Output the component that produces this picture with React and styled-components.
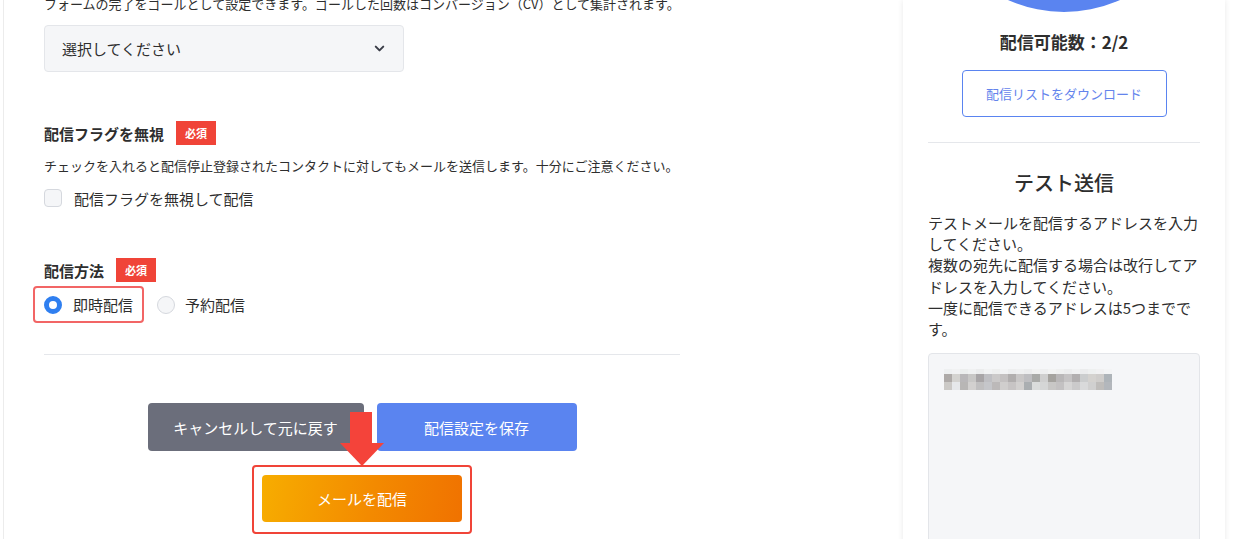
import React from 'react'
import styled, { createGlobalStyle } from 'styled-components'

const GlobalStyle = createGlobalStyle`
    html, body {
        margin: 0;
        padding: 0;
        background: #fff;
        overflow: hidden;
    }
    body {
        font-family: 'Noto Sans CJK JP', 'Noto Sans', sans-serif;
        color: #2e2e2e;
    }
`

const blur = [
    ['#eef0f1', '#f1f2f3', '#eceeee', '#f0f1f2', '#ebeced', '#f1f2f3', '#eeefef', '#f2f3f4', '#edeeef', '#eff0f1', '#ecedee', '#f1f2f2', '#eeeff0', '#f2f3f3', '#eff0f0', '#ecedee', '#f0f1f2', '#ebeced', '#eef0f0', '#f1f1f2', '#f3f4f5'],
    ['#aeaaa8', '#d4d3d0', '#b9b7b9', '#c8c7c6', '#a8a5a7', '#bfbfc3', '#cbc9c9', '#c4c1c1', '#b1aeae', '#c9c7c7', '#bebec1', '#a9aaa8', '#cfcfcf', '#a5a39f', '#b9b7b8', '#c5c3c4', '#b2afb0', '#cbcdce', '#d4d2cf', '#cfcdcb', '#aeb4b9'],
    ['#cbc9c6', '#e6e8ea', '#b8b6b5', '#d2d0cf', '#c0bfc0', '#c5c6ca', '#bcb9b9', '#d0cecd', '#c7c4c4', '#d2d0cf', '#aaaeb1', '#dadcdc', '#d5d6d6', '#c8c7c6', '#c3c1c2', '#d6d5d5', '#cbcacb', '#d9dadb', '#d0d0d0', '#bfbdbb', '#b3b7bc'],
]

const App = () => {
    return (
        <>
            <GlobalStyle />
            <Page>
                <MainCard>
                    <Hint className="top">
                        フォームの完了をゴールとして設定できます。ゴールした回数はコンバージョン（CV）として集計されます。
                    </Hint>
                    <Select>
                        <span>選択してください</span>
                        <svg width="15" height="15" viewBox="0 0 24 24" fill="none" stroke="#3a3d48" strokeWidth="3.2" strokeLinecap="round" strokeLinejoin="round">
                            <polyline points="6 9 12 15 18 9" />
                        </svg>
                    </Select>

                    <Field>
                        <Label>
                            配信フラグを無視<Badge>必須</Badge>
                        </Label>
                        <Hint>チェックを入れると配信停止登録されたコンタクトに対してもメールを送信します。十分にご注意ください。</Hint>
                        <CheckRow>
                            <Checkbox />
                            配信フラグを無視して配信
                        </CheckRow>
                    </Field>

                    <Field>
                        <Label>
                            配信方法<Badge>必須</Badge>
                        </Label>
                        <RadioGroup>
                            <RadioOption highlight>
                                <Radio checked />
                                即時配信
                            </RadioOption>
                            <RadioOption>
                                <Radio />
                                予約配信
                            </RadioOption>
                        </RadioGroup>
                    </Field>

                    <Divider />

                    <Actions>
                        <ButtonRow>
                            <Button variant="cancel" width={216}>キャンセルして元に戻す</Button>
                            <Button variant="save" width={200}>配信設定を保存</Button>
                        </ButtonRow>
                        <SendFrame>
                            <Button variant="send" width={200}>メールを配信</Button>
                        </SendFrame>
                        <Arrow width="44" height="55" viewBox="0 0 44 55">
                            <rect x="10" y="0" width="22" height="33" fill="#f4433a" />
                            <polygon points="0,31 44,31 22,54" fill="#f4433a" />
                        </Arrow>
                    </Actions>
                </MainCard>

                <SideCard>
                    <ChartClip>
                        <Circle />
                    </ChartClip>
                    <Count>配信可能数：2/2</Count>
                    <OutlineButton>配信リストをダウンロード</OutlineButton>
                    <SideDivider />
                    <SideTitle>テスト送信</SideTitle>
                    <SideText>
                        テストメールを配信するアドレスを入力してください。
                        <br />
                        複数の宛先に配信する場合は改行してアドレスを入力してください。
                        <br />
                        一度に配信できるアドレスは5つまでです。
                    </SideText>
                    <TextArea>
                        <Mosaic>
                            {blur.map((row, r) =>
                                row.map((c, i) => <i key={`${r}-${i}`} style={{ background: c }} />)
                            )}
                        </Mosaic>
                    </TextArea>
                </SideCard>
            </Page>
        </>
    )
}

export default App

const Page = styled.div`
    display: flex;
    align-items: flex-start;
    gap: 23px;
    padding-left: 3px;
    height: 539px;
    overflow: hidden;
`

const MainCard = styled.div`
    width: 877px;
    box-sizing: border-box;
    border-left: 1px solid #ececec;
    padding: 0 200px 40px 40px;
    min-height: 560px;
    display: flex;
    flex-direction: column;

    .top {
        margin-top: -6px;
    }
`

const Hint = styled.p`
    margin: 0;
    font-size: 13px;
    line-height: 20px;
    white-space: nowrap;
`

const Select = styled.div`
    margin-top: 11px;
    width: 360px;
    height: 47px;
    box-sizing: border-box;
    background: #f5f6f8;
    border: 1px solid #e4e6ea;
    border-radius: 4px;
    display: flex;
    align-items: center;
    justify-content: space-between;
    padding: 0 16px 0 17px;
    font-size: 15px;
`

const Field = styled.div`
    margin-top: 49px;
    display: flex;
    flex-direction: column;

    & + & {
        margin-top: 50px;
    }

    ${Hint} {
        margin-top: 11px;
    }
`

const Label = styled.div`
    display: flex;
    align-items: center;
    gap: 12px;
    height: 24px;
    font-size: 15px;
    font-weight: 700;
`

const Badge = styled.span`
    display: inline-flex;
    align-items: center;
    justify-content: center;
    width: 40px;
    height: 24px;
    background: #f04438;
    color: #fff;
    font-size: 11px;
    font-weight: 700;
`

const CheckRow = styled.label`
    margin-top: 12px;
    display: flex;
    align-items: center;
    gap: 12px;
    height: 20px;
    font-size: 15px;
`

const Checkbox = styled.span`
    width: 18px;
    height: 18px;
    box-sizing: border-box;
    border: 1px solid #d5d8de;
    background: #f5f6f8;
    border-radius: 4px;
`

const RadioGroup = styled.div`
    margin-top: 4px;
    display: flex;
    align-items: center;
    gap: 12px;
`

const RadioOption = styled.label`
    display: flex;
    align-items: center;
    gap: 11px;
    height: 37px;
    box-sizing: border-box;
    font-size: 15px;
    border: 2px solid ${p => (p.highlight ? '#f26565' : 'transparent')};
    border-radius: 4px;
    padding: 0 9px;
    margin-left: ${p => (p.highlight ? '-11px' : '0')};

    & + & {
        padding-left: 0;
        margin-left: -1px;
        gap: 10px;
    }
`

const Radio = styled.span`
    width: 18px;
    height: 18px;
    box-sizing: border-box;
    border-radius: 50%;
    background: ${p => (p.checked ? '#fff' : '#f5f6f8')};
    border: ${p => (p.checked ? '5px solid #2f7ff0' : '1px solid #d5d8de')};
`

const Divider = styled.hr`
    margin: 31px 0 0;
    border: 0;
    border-top: 1px solid #e5e7eb;
    width: 636px;
`

const Actions = styled.div`
    position: relative;
    width: 636px;
    margin-top: 48px;
    display: flex;
    flex-direction: column;
    align-items: center;
    gap: 14px;
`

const ButtonRow = styled.div`
    display: flex;
    gap: 13px;
`

const buttonBg = {
    cancel: '#6b6e7b',
    save: '#5a84f0',
    send: 'linear-gradient(100deg, #f7ad00 0%, #f38a00 55%, #f07200 100%)',
}

const Button = styled.button`
    width: ${p => p.width}px;
    height: 48px;
    border: 0;
    border-radius: 4px;
    background: ${p => buttonBg[p.variant]};
    color: #fff;
    font-family: inherit;
    font-size: 15px;
    padding: 0;
`

const SendFrame = styled.div`
    border: 2px solid #f04438;
    border-radius: 4px;
    padding: 8px 8px 10px;

    ${Button} {
        height: 47px;
        display: block;
    }
`

const Arrow = styled.svg`
    position: absolute;
    left: 296px;
    top: 9px;
`

const SideCard = styled.div`
    width: 322px;
    box-sizing: border-box;
    padding: 0 25px 0 25px;
    min-height: 560px;
    background: #fff;
    box-shadow: 0 0 6px rgba(0, 0, 0, 0.09);
    display: flex;
    flex-direction: column;
    align-items: center;
`

const ChartClip = styled.div`
    width: 100%;
    height: 12px;
    overflow: hidden;
    display: flex;
    align-items: flex-end;
    justify-content: center;
`

const Circle = styled.div`
    flex-shrink: 0;
    width: 274px;
    height: 274px;
    border-radius: 50%;
    background: #5a84f0;
`

const Count = styled.div`
    margin-top: 18px;
    font-size: 17px;
    line-height: 24px;
    font-weight: 700;
`

const OutlineButton = styled.button`
    margin-top: 16px;
    width: 205px;
    height: 47px;
    border: 1px solid #5a84f0;
    border-radius: 4px;
    background: #fff;
    color: #6484ec;
    font-family: inherit;
    font-size: 13px;
`

const SideDivider = styled.hr`
    width: 100%;
    margin: 25px 0 0;
    border: 0;
    border-top: 1px solid #e5e7eb;
`

const SideTitle = styled.h2`
    margin: 25px 0 0;
    font-size: 20px;
    line-height: 30px;
    font-weight: 500;
`

const SideText = styled.p`
    align-self: stretch;
    margin: 14px 0 0;
    font-size: 15px;
    line-height: 21.2px;
`

const TextArea = styled.div`
    align-self: stretch;
    margin-top: 14px;
    height: 220px;
    background: #f5f6f8;
    border: 1px solid #e3e5e9;
    border-radius: 4px;
    padding: 15px 15px;
`

const Mosaic = styled.div`
    display: grid;
    grid-template-columns: repeat(21, 8px);
    grid-template-rows: 5px 8px 8px;

    i {
        display: block;
    }
`
